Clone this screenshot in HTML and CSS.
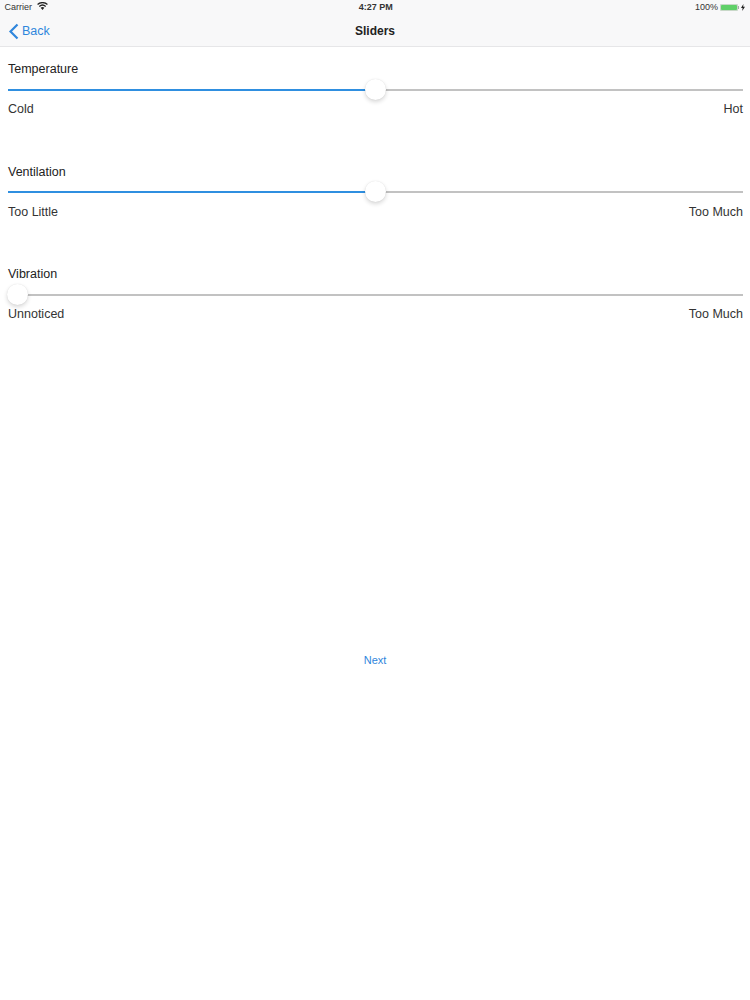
FILE: index.html
```html
<!DOCTYPE html>
<html lang="en">
<head>
<meta charset="utf-8">
<title>Sliders</title>
<link rel="stylesheet" href="styles.css">
</head>
<body>
<header class="chrome">
  <div class="status">
    <div class="status-left">
      <span>Carrier</span>
      <svg class="wifi" width="11" height="8" viewBox="0 0 12 9"><path d="M6 9 3.9 6.6a3.2 3.2 0 0 1 4.2 0z" fill="#222"/><path d="M2.9 5.5a4.7 4.7 0 0 1 6.2 0l1-1.1a6.2 6.2 0 0 0-8.2 0z" fill="#222"/><path d="M.9 3.3a7.7 7.7 0 0 1 10.2 0L12 2.2a9.1 9.1 0 0 0-12 0z" fill="#222"/></svg>
    </div>
    <div class="status-time">4:27 PM</div>
    <div class="status-right">
      <span>100%</span>
      <span class="battery"><span class="battery-fill"></span></span>
      <span class="battery-cap"></span>
      <svg class="bolt" width="4" height="7" viewBox="0 0 4 7"><path d="M2.4 0 0 4h1.6L1.2 7 4 2.8H2.2z" fill="#222"/></svg>
    </div>
  </div>
  <nav class="navbar">
    <a class="back">
      <svg width="11" height="17" viewBox="0 0 11 17"><path d="M9.5 1.5 2.5 8.5l7 7" fill="none" stroke="#2f86dc" stroke-width="2.2"/></svg>
      <span>Back</span>
    </a>
    <h1 class="title">Sliders</h1>
  </nav>
</header>
<main class="content">
  <section class="group">
    <div class="label">Temperature</div>
    <div class="slider"><div class="fill half"></div><div class="thumb at-half"></div></div>
    <div class="ends"><span>Cold</span><span>Hot</span></div>
  </section>
  <section class="group">
    <div class="label">Ventilation</div>
    <div class="slider"><div class="fill half"></div><div class="thumb at-half"></div></div>
    <div class="ends"><span>Too Little</span><span>Too Much</span></div>
  </section>
  <section class="group">
    <div class="label">Vibration</div>
    <div class="slider"><div class="thumb at-start"></div></div>
    <div class="ends"><span>Unnoticed</span><span>Too Much</span></div>
  </section>
  <div class="next-row"><a class="next">Next</a></div>
</main>
</body>
</html>
```

FILE: styles.css
```css
* { box-sizing: border-box; }
html, body { margin: 0; padding: 0; background: #fff; }
body { width: 750px; height: 1000px; overflow: hidden; font-family: "Liberation Sans", Arial, sans-serif; color: #222; }

.chrome { height: 47px; background: #f8f8f9; border-bottom: 1px solid #e6e6e8; }
.status { height: 14px; padding: 0 5px 0 4.5px; display: grid; grid-template-columns: 1fr auto 1fr; align-items: center; font-size: 9px; color: #333; }
.status-left { display: flex; align-items: center; gap: 5px; }
.wifi { margin-top: -2px; }
.status-time { font-weight: 700; font-size: 9px; padding-left: 2px; }
.status-right { display: flex; align-items: center; justify-content: flex-end; }
.battery { width: 18px; height: 7px; margin-left: 2px; padding: 1px; background: #c8d8c8; border-radius: 1px; display: flex; }
.battery-fill { flex: 1; background: #5fd068; border-radius: 1px; }
.battery-cap { width: 1px; height: 3px; background: #aaa; }
.bolt { margin-left: 2px; }

.navbar { height: 32px; display: grid; grid-template-columns: 1fr auto 1fr; align-items: center; padding: 2px 8px 0; }
.back { grid-column: 1; grid-row: 1; display: flex; align-items: center; gap: 3px; color: #2f86dc; font-size: 12.5px; }
.title { grid-column: 2; grid-row: 1; margin: 0; font-size: 12px; font-weight: 700; color: #222; }

.content { padding: 15px 7px 0 8px; }
.group { height: 102.5px; font-size: 12.5px; }
.label { height: 15px; line-height: 15px; }
.slider { position: relative; height: 2px; margin-top: 11.5px; background: #c2c2c2; }
.fill { height: 2px; background: #2f8fe0; }
.half { width: 50%; }
.thumb { position: absolute; top: -10px; width: 21px; height: 21px; border-radius: 50%; background: #fff; box-shadow: 0 2px 4px rgba(0,0,0,.16), 0 0 1px rgba(0,0,0,.12); }
.at-half { left: calc(50% - 11px); }
.at-start { left: -1.5px; }
.ends { display: flex; justify-content: space-between; margin-top: 11.5px; height: 15px; line-height: 15px; color: #333; }

.next-row { display: flex; justify-content: center; margin-top: 284px; padding-right: 1px; }
.next { color: #2f86dc; font-size: 11px; line-height: 13px; }
```
